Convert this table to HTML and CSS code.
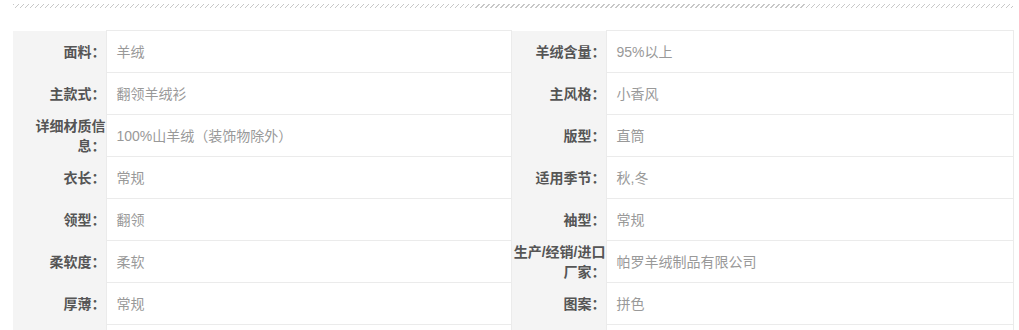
FILE: index.html
```html
<!DOCTYPE html>
<html lang="zh-CN">
<head>
<meta charset="utf-8">
<title>产品参数</title>
<link rel="stylesheet" href="styles.css">
</head>
<body>
<div class="page">
  <div class="hatch"></div>
  <table class="attrs">
    <colgroup>
      <col class="c-key1"><col class="c-val1"><col class="c-key2"><col class="c-val2">
    </colgroup>
    <tbody>
      <tr>
        <th class="k">面料：</th><td class="v">羊绒</td>
        <th class="k">羊绒含量：</th><td class="v">95%以上</td>
      </tr>
      <tr>
        <th class="k">主款式：</th><td class="v">翻领羊绒衫</td>
        <th class="k">主风格：</th><td class="v">小香风</td>
      </tr>
      <tr>
        <th class="k">详细材质信息：</th><td class="v">100%山羊绒（装饰物除外）</td>
        <th class="k">版型：</th><td class="v">直筒</td>
      </tr>
      <tr>
        <th class="k">衣长：</th><td class="v">常规</td>
        <th class="k">适用季节：</th><td class="v">秋,冬</td>
      </tr>
      <tr>
        <th class="k">领型：</th><td class="v">翻领</td>
        <th class="k">袖型：</th><td class="v">常规</td>
      </tr>
      <tr>
        <th class="k">柔软度：</th><td class="v">柔软</td>
        <th class="k">生产/经销/进口厂家：</th><td class="v">帕罗羊绒制品有限公司</td>
      </tr>
      <tr>
        <th class="k">厚薄：</th><td class="v">常规</td>
        <th class="k">图案：</th><td class="v">拼色</td>
      </tr>
      <tr>
        <th class="k"></th><td class="v"></td>
        <th class="k"></th><td class="v"></td>
      </tr>
    </tbody>
  </table>
</div>
</body>
</html>
```

FILE: styles.css
```css
html, body {
  margin: 0;
  padding: 0;
  background: #fff;
}

body {
  font-family: "Liberation Sans", "Noto Sans CJK SC", sans-serif;
  font-size: 14px;
}

.page {
  padding: 4px 6px 0 13px;
  width: 1000px;
}

.hatch {
  height: 4px;
  background: repeating-linear-gradient(135deg, #c8c8c8 0 1px, transparent 1px 3.54px);
}

.attrs {
  margin-top: 22px;
  width: 1000px;
  table-layout: fixed;
  border-collapse: collapse;
}

.c-key1 { width: 93px; }
.c-val1 { width: 405px; }
.c-key2 { width: 95px; }
.c-val2 { width: 407px; }

.attrs th,
.attrs td {
  height: 42px;
  box-sizing: border-box;
  vertical-align: middle;
  line-height: 20px;
}

.k {
  background: #f4f4f4;
  color: #555;
  font-weight: bold;
  text-align: right;
  padding: 0 0 0 2px;
  border: none;
}

.v {
  color: #999;
  text-align: left;
  padding: 0 0 0 10px;
  border: 1px solid #ebebeb;
}
```
